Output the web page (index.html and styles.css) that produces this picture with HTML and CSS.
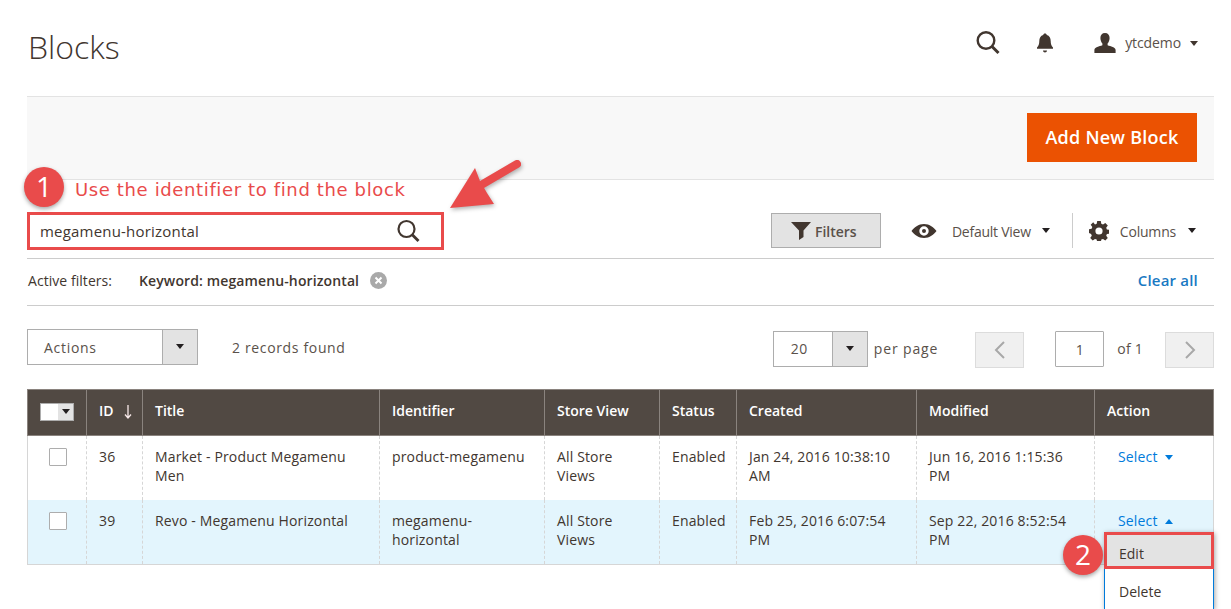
FILE: index.html
```html
<!DOCTYPE html>
<html lang="en">
<head>
    <meta charset="UTF-8">
    <title>Blocks</title>
    <link rel="stylesheet" href="styles.css">
</head>
<body>
    <header class="page-header">
        <h1>Blocks</h1>
        <div class="header-tools">
            <svg class="icon-search-top" width="26" height="26" viewBox="0 0 26 26"><circle cx="11" cy="10.500" r="8.300" fill="none" stroke="#41362f" stroke-width="2.400"/><path d="M17 16.500l6.500 6.500" stroke="#41362f" stroke-width="3" fill="none"/></svg>
            <svg class="icon-bell" width="18" height="20" viewBox="0 0 18 20"><path d="M9 .5c1 0 1.700.7 1.800 1.600 2.700.8 3.900 3 3.900 6 0 3.200.7 4.800 2.300 6.400v1.300H1v-1.300c1.600-1.600 2.300-3.200 2.300-6.400 0-3 1.200-5.200 3.900-6C7.300 1.200 8 .5 9 .5zM7 17.500h4c0 1-.9 2-2 2s-2-1-2-2z" fill="#41362f"/></svg>
            <div class="user-menu">
                <svg width="22" height="20" viewBox="0 0 22 20"><path d="M11 0c3 0 4.600 2 4.600 5 0 2.200-.8 4.300-2 5.400v1.800c3 1 8 2.100 8 4.800V20H.4v-3c0-2.700 5-3.800 8-4.800v-1.800c-1.200-1.100-2-3.200-2-5.400 0-3 1.600-5 4.600-5z" fill="#41362f"/></svg>
                <span>ytcdemo</span>
                <i class="caret small"></i>
            </div>
        </div>
    </header>

    <div class="action-bar">
        <button class="btn-primary">Add New Block</button>
    </div>

    <div class="search-row">
        <div class="search-box">
            <span>megamenu-horizontal</span>
            <svg width="24" height="24" viewBox="0 0 24 24"><circle cx="10.500" cy="10" r="8" fill="none" stroke="#41362f" stroke-width="2.200"/><path d="M16 15.500l6.500 6.500" stroke="#41362f" stroke-width="2.800" fill="none"/></svg>
        </div>
        <div class="grid-tools">
            <button class="btn-filters">
                <svg width="20" height="18" viewBox="0 0 20 18"><path d="M0 0h20l-7.500 8.500V15L8 18V8.500z" fill="#41362f"/></svg>
                <span>Filters</span>
            </button>
            <div class="tool view-tool">
                <svg width="26" height="14" viewBox="0 0 26 14"><path fill-rule="evenodd" d="M13 0c5.500 0 10 3.500 12.500 7C23 10.500 18.500 14 13 14S3 10.500.5 7C3 3.500 7.500 0 13 0zm0 2.300a4.700 4.700 0 1 0 0 9.400 4.700 4.700 0 0 0 0-9.400zm0 2.700a2 2 0 1 1 0 4 2 2 0 0 1 0-4z" fill="#41362f"/></svg>
                <span>Default View</span>
                <i class="caret"></i>
            </div>
            <div class="tool columns-tool">
                <svg width="20" height="20" viewBox="0 0 20 20"><path fill-rule="evenodd" d="M8.200 0h3.600l.5 2.800 1.700.7 2.300-1.600 2.500 2.500-1.600 2.300.7 1.700 2.800.5v3.600l-2.800.5-.7 1.700 1.600 2.300-2.500 2.500-2.300-1.600-1.700.7-.5 2.800H8.200l-.5-2.800-1.700-.7-2.300 1.600-2.500-2.500 1.600-2.300-.7-1.700L-.2 11.800V8.200l2.800-.5.7-1.700-1.600-2.300 2.500-2.500L6 3.500l1.700-.7zM10 6.400a3.600 3.600 0 1 0 0 7.200 3.600 3.600 0 0 0 0-7.200z" fill="#41362f"/></svg>
                <span>Columns</span>
                <i class="caret"></i>
            </div>
        </div>
    </div>

    <div class="filters-row">
        <span class="filters-label">Active filters:</span>
        <span class="filters-value">Keyword: megamenu-horizontal</span>
        <svg width="17" height="17" viewBox="0 0 17 17"><circle cx="8.500" cy="8.500" r="8.500" fill="#a9a9a9"/><path d="M5.500 5.500l6 6m0-6l-6 6" stroke="#fff" stroke-width="2"/></svg>
        <a class="clear-all">Clear all</a>
    </div>

    <div class="toolbar">
        <div class="actions-select">
            <span>Actions</span>
            <div class="select-btn"><i class="caret"></i></div>
        </div>
        <span class="records">2 records found</span>
        <div class="pager">
            <div class="perpage-select">
                <span>20</span>
                <div class="select-btn"><i class="caret"></i></div>
            </div>
            <span class="perpage-label">per page</span>
            <div class="page-btn prev"><svg width="12" height="18" viewBox="0 0 12 18"><path d="M10 1L2 9l8 8" fill="none" stroke="#a8a8a8" stroke-width="2"/></svg></div>
            <div class="page-input">1</div>
            <span class="page-of">of 1</span>
            <div class="page-btn"><svg width="12" height="18" viewBox="0 0 12 18"><path d="M2 1l8 8-8 8" fill="none" stroke="#a8a8a8" stroke-width="2"/></svg></div>
        </div>
    </div>

    <table class="grid">
        <colgroup>
            <col class="c-check"><col class="c-id"><col class="c-title"><col class="c-ident"><col class="c-store"><col class="c-status"><col class="c-created"><col class="c-modified"><col class="c-action">
        </colgroup>
        <thead>
            <tr>
                <th><div class="mass-select"><span></span><div><i class="caret tiny"></i></div></div></th>
                <th>ID<svg class="sort-arrow" width="8" height="14" viewBox="0 0 8 14"><path d="M4 0v12M1 9.500L4 13l3-3.500" fill="none" stroke="#f7e9e9" stroke-width="1.300"/></svg></th>
                <th>Title</th>
                <th>Identifier</th>
                <th>Store View</th>
                <th>Status</th>
                <th>Created</th>
                <th>Modified</th>
                <th>Action</th>
            </tr>
        </thead>
        <tbody>
            <tr>
                <td><div class="check"></div></td>
                <td>36</td>
                <td>Market - Product Megamenu Men</td>
                <td>product-megamenu</td>
                <td>All Store Views</td>
                <td>Enabled</td>
                <td>Jan 24, 2016 10:38:10 AM</td>
                <td>Jun 16, 2016 1:15:36 PM</td>
                <td class="action-cell"><a>Select</a><i class="caret blue"></i></td>
            </tr>
            <tr class="active">
                <td><div class="check"></div></td>
                <td>39</td>
                <td>Revo - Megamenu Horizontal</td>
                <td>megamenu-<br>horizontal</td>
                <td>All Store Views</td>
                <td>Enabled</td>
                <td>Feb 25, 2016 6:07:54 PM</td>
                <td>Sep 22, 2016 8:52:54 PM</td>
                <td class="action-cell"><a>Select</a><i class="caret blue up"></i></td>
            </tr>
        </tbody>
    </table>

    <ul class="action-menu">
        <li class="edit">Edit</li>
        <li>Delete</li>
    </ul>

    <!-- tutorial annotations -->
    <div class="badge badge-one">1</div>
    <div class="note">Use the identifier to find the block</div>
    <svg class="note-arrow" width="90" height="62" viewBox="0 0 90 62"><path d="M67 6L26 30" stroke="#e94b4b" stroke-width="8" stroke-linecap="round"/><path d="M0 50L25 10l5 13 7 12 7 11z" fill="#e94b4b"/></svg>
    <div class="badge badge-two">2</div>
</body>
</html>
```

FILE: styles.css
```css
html, body {
    height: 609px;
    overflow: hidden;
}
body {
    margin: 0;
    padding: 0 17px 0 27px;
    position: relative;
    box-sizing: border-box;
    font-family: 'Open Sans', sans-serif;
    font-size: 14px;
    color: #41362f;
    background: #fff;
}
.page-header {
    height: 96px;
    display: flex;
    justify-content: space-between;
}
h1 {
    margin: 26px 0 0 1px;
    font-size: 32px;
    line-height: 42px;
    font-weight: 300;
}
.header-tools {
    display: flex;
    align-items: center;
    height: 86px;
    padding-right: 16px;
}
.icon-search-top {
    margin-right: 35px;
}
.icon-bell {
    margin-right: 40px;
}
.user-menu {
    display: flex;
    align-items: center;
    color: #5a514a;
}
.user-menu span {
    margin: -2px 9px 0 9px;
    letter-spacing: -.1px;
}
.caret {
    display: inline-block;
    width: 0;
    height: 0;
    border-left: 4.500px solid transparent;
    border-right: 4.500px solid transparent;
    border-top: 5px solid #231f20;
}
.caret.small {
    border-top-color: #41362f;
}
.caret.tiny {
    border-left-width: 4px;
    border-right-width: 4px;
}
.caret.blue {
    border-top-color: #007bdb;
    margin-left: 7px;
    position: relative;
    top: -2px;
}
.caret.up {
    border-top: 0;
    border-bottom: 5px solid #007bdb;
}
.action-bar {
    height: 81px;
    padding-bottom: 1px;
    background: #f8f8f8;
    border-top: 1px solid #e3e3e3;
    border-bottom: 1px solid #e3e3e3;
    display: flex;
    justify-content: flex-end;
    align-items: center;
    padding-right: 17px;
}
.btn-primary {
    width: 170px;
    height: 49px;
    padding: 0 0 2px;
    border: 0;
    background: #eb5202;
    color: #fff;
    font-family: inherit;
    font-size: 18px;
    font-weight: 600;
    letter-spacing: .25px;
}
.search-row {
    height: 79px;
    border-bottom: 1px solid #ccc;
    display: flex;
    justify-content: space-between;
    box-sizing: border-box;
}
.search-box {
    margin-top: 32px;
    width: 417px;
    height: 38px;
    box-sizing: border-box;
    border: 3px solid #e94b4b;
    display: flex;
    align-items: center;
    justify-content: space-between;
    padding: 0 21px 0 10px;
    font-size: 15px;
    letter-spacing: .2px;
}
.grid-tools {
    display: flex;
    margin-top: 33px;
    height: 35px;
    padding-right: 18px;
    align-items: center;
}
.btn-filters {
    width: 110px;
    height: 35px;
    padding: 0 0 0 19px;
    background: #e3e3e3;
    border: 1px solid #adadad;
    font-family: inherit;
    font-size: 14px;
    font-weight: 600;
    color: #5a514a;
    display: flex;
    align-items: center;
    gap: 4px;
    margin-right: 30px;
}
.btn-filters span,
.tool span {
    padding-top: 2px;
}
.tool {
    display: flex;
    align-items: center;
    color: #5a514a;
    letter-spacing: -.2px;
}
.view-tool {
    height: 35px;
    padding-right: 22px;
    border-right: 1px solid #ccc;
}
.view-tool span {
    margin: 0 11px 0 15px;
    letter-spacing: -.25px;
}
.columns-tool {
    padding-left: 16px;
}
.columns-tool span {
    margin: 0 12px 0 11px;
}
.filters-row {
    height: 42px;
    padding-bottom: 4px;
    border-bottom: 1px solid #ccc;
    display: flex;
    align-items: center;
}
.filters-label {
    width: 111px;
    margin-left: 1px;
    font-size: 14px;
    letter-spacing: .05px;
}
.filters-value {
    font-weight: 600;
    margin-right: 11px;
    font-size: 14px;
    letter-spacing: .12px;
}
.clear-all {
    margin-left: auto;
    margin-right: 16px;
    color: #1979c3;
    font-size: 15px;
    font-weight: 600;
    letter-spacing: .2px;
}
.toolbar {
    margin-top: 22px;
    height: 37px;
    display: flex;
    align-items: center;
}
.actions-select,
.perpage-select {
    display: flex;
    box-sizing: border-box;
    height: 36px;
    border: 1px solid #adadad;
    color: #5a514a;
    align-items: center;
    justify-content: space-between;
}
.actions-select {
    width: 171px;
    padding-left: 16px;
    letter-spacing: .7px;
}
.actions-select span {
    padding-top: 2px;
}
.perpage-select {
    width: 95px;
    padding-left: 17px;
    letter-spacing: .5px;
}
.select-btn {
    width: 34px;
    height: 34px;
    background: #e3e3e3;
    border-left: 1px solid #adadad;
    display: flex;
    align-items: center;
    justify-content: center;
}
.records {
    margin-left: 34px;
    padding-top: 2px;
    letter-spacing: .65px;
    color: #5a514a;
}
.pager {
    margin-left: auto;
    padding-top: 4px;
    display: flex;
    align-items: center;
    color: #5a514a;
}
.perpage-label {
    margin: 0 37px 0 6px;
    letter-spacing: .85px;
}
.page-btn {
    width: 49px;
    height: 36px;
    margin-top: 2px;
    box-sizing: border-box;
    background: #f0f0f0;
    border: 1px solid #dcdcdc;
    display: flex;
    align-items: center;
    justify-content: center;
}
.page-btn.prev {
    margin-right: 31px;
}
.page-input {
    width: 49px;
    height: 36px;
    box-sizing: border-box;
    border: 1px solid #adadad;
    border-radius: 1px;
    text-align: center;
    line-height: 36px;
}
.page-of {
    margin: 0 22px 0 13px;
    letter-spacing: .25px;
}
.grid {
    margin-top: 24px;
    width: 1186px;
    border-collapse: collapse;
    table-layout: fixed;
}
.c-check { width: 59px; }
.c-id { width: 56px; }
.c-title { width: 237px; }
.c-ident { width: 165px; }
.c-store { width: 115px; }
.c-status { width: 77px; }
.c-created { width: 180px; }
.c-modified { width: 178px; }
.c-action { width: 119px; }
th {
    height: 46px;
    box-sizing: border-box;
    background: #514943;
    color: #fff;
    font-size: 14px;
    font-weight: 600;
    text-align: left;
    white-space: nowrap;
    padding: 0 11px 4px 12px;
    border: 1px solid #8a837e;
}
.sort-arrow {
    margin-left: 10px;
    vertical-align: -3px;
}
td {
    height: 64px;
    box-sizing: border-box;
    padding: 11px 12px 0;
    vertical-align: top;
    line-height: 19px;
    font-size: 14px;
    letter-spacing: .15px;
    border-left: 1px dashed #d6d6d6;
    border-right: 1px dashed #d6d6d6;
}
tbody tr td:first-child {
    border-left: 1px solid #d6d6d6;
}
tbody tr td:last-child {
    border-right: 1px solid #d6d6d6;
}
tr.active td {
    height: 65px;
    background: #e3f5fd;
    border-bottom: 1px solid #d6d6d6;
}
.check {
    width: 18px;
    height: 18px;
    box-sizing: border-box;
    margin: 1px 0 0 9px;
    background: #fff;
    border: 1px solid #adadad;
    border-radius: 1px;
}
.mass-select {
    display: flex;
    width: 34px;
    height: 18px;
    margin-top: 2px;
    border: 1px solid #adadad;
    box-sizing: border-box;
}
.mass-select span {
    width: 17px;
    background: #fff;
}
.mass-select div {
    flex: 1;
    background: #e3e3e3;
    display: flex;
    align-items: center;
    justify-content: center;
}
.action-cell a {
    color: #007bdb;
    margin-left: 11px;
}
.action-menu {
    position: absolute;
    left: 1104px;
    top: 532px;
    width: 110px;
    height: 77px;
    margin: 0;
    padding: 0;
    list-style: none;
    box-sizing: border-box;
    background: #fff;
    border: 1px solid #007bdb;
    border-bottom: 0;
    box-shadow: 1px 1px 5px rgba(0, 0, 0, .35);
}
.action-menu li {
    height: 40px;
    line-height: 45px;
    padding-left: 14px;
    box-sizing: border-box;
}
.action-menu .edit {
    height: 37px;
    line-height: 37px;
    margin: -1px -1px 0;
    padding-left: 12px;
    background: #e3e3e3;
    border: 3px solid #e94b4b;
}
.badge {
    position: absolute;
    width: 40px;
    height: 40px;
    border-radius: 50%;
    background: #e94b4b;
    color: #fff;
    text-align: center;
    font-size: 28px;
    line-height: 38px;
    box-shadow: 0 2px 4px rgba(0, 0, 0, .35);
}
.badge-one {
    left: 24px;
    top: 167px;
}
.badge-two {
    left: 1063px;
    top: 535px;
}
.note {
    position: absolute;
    left: 75px;
    top: 178px;
    font-family: 'DejaVu Sans', sans-serif;
    font-size: 18px;
    line-height: 24px;
    letter-spacing: .63px;
    color: #e94b4b;
}
.note-arrow {
    position: absolute;
    left: 450px;
    top: 158px;
    filter: drop-shadow(1px 2px 2px rgba(0, 0, 0, .3));
}
```
